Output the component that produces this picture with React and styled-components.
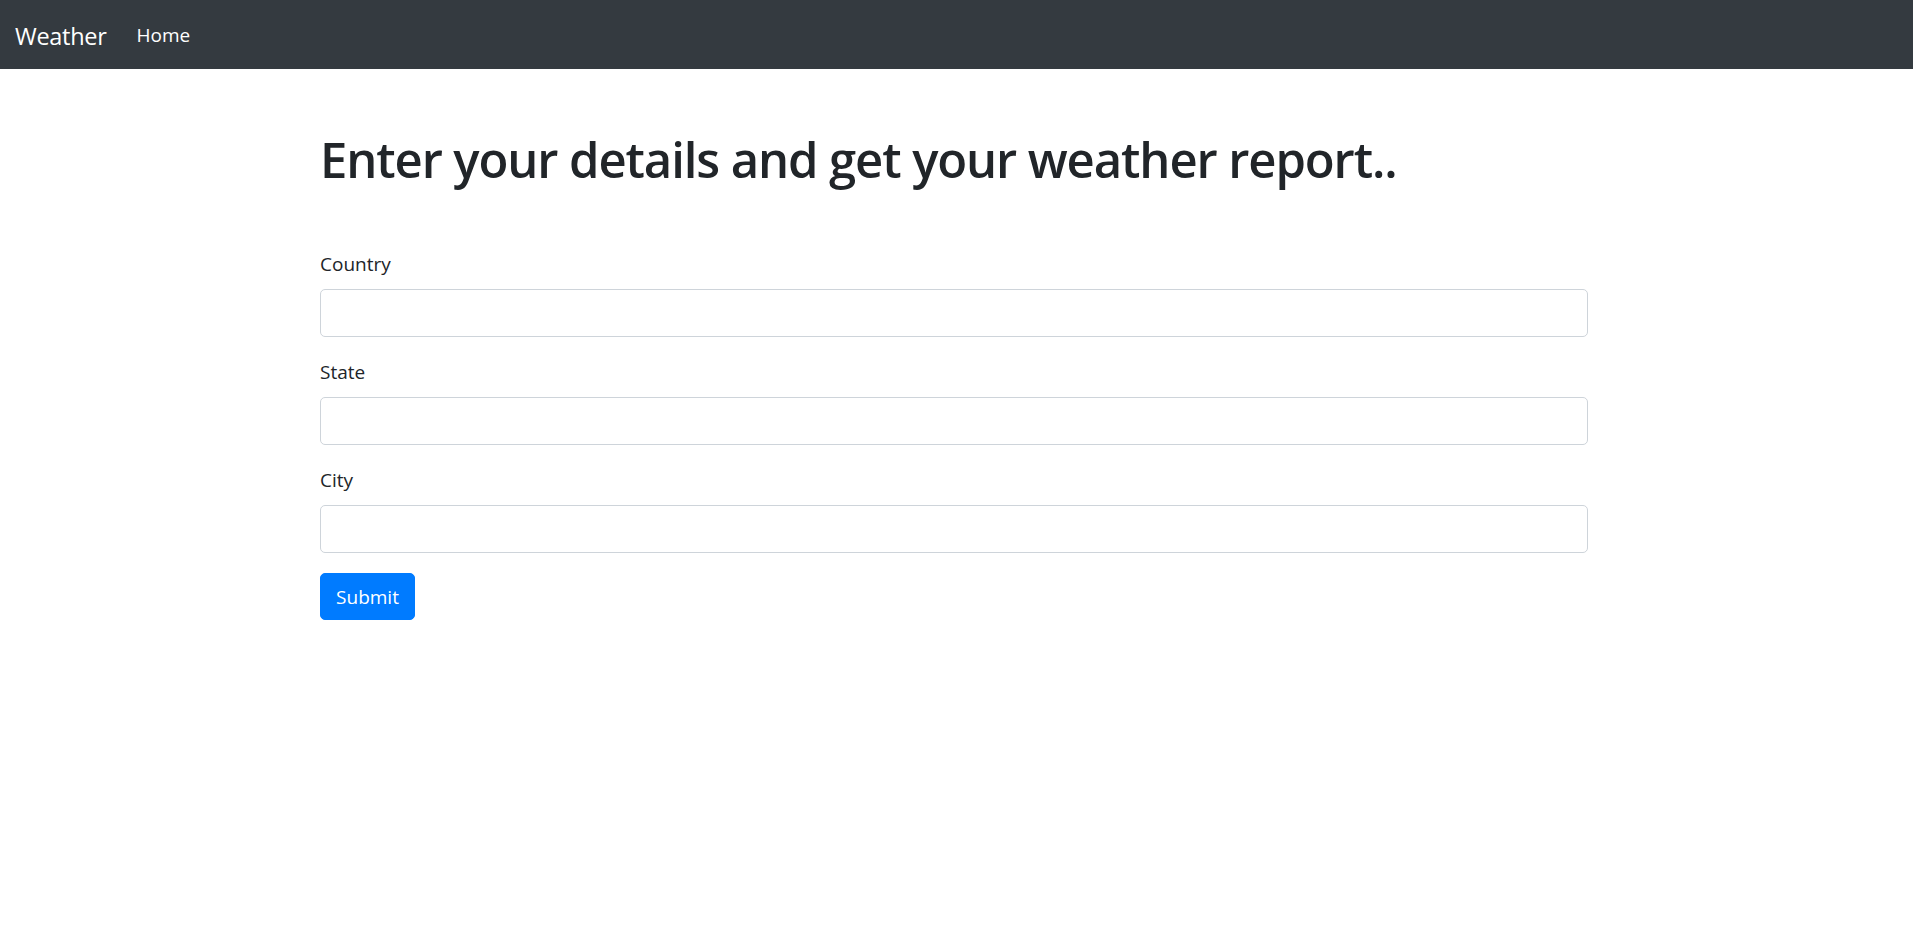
import styled, { createGlobalStyle } from 'styled-components';

const GlobalStyle = createGlobalStyle`
  body {
    margin: 0;
    background: #fff;
    font-family: "Segoe UI", "Open Sans", "Noto Sans", sans-serif;
    color: #212529;
  }
`;

const Navbar = styled.nav`
  display: flex;
  align-items: center;
  height: 69px;
  padding: 0 15px;
  background-color: #343a40;
  box-sizing: border-box;
`;

const Brand = styled.a`
  font-size: 23.5px;
  color: #fff;
  margin-right: 30px;
  margin-top: 2px;
  letter-spacing: -0.3px;
  text-decoration: none;
`;

const NavLink = styled.a`
  font-size: 19px;
  color: #fff;
  text-decoration: none;
`;

const Main = styled.main`
  padding: 60px 325px 0 320px;
`;

const Heading = styled.h1`
  margin: 0 0 60px;
  font-size: 49px;
  font-weight: 600;
  line-height: 60px;
  letter-spacing: -1.1px;
`;

const Field = styled.div`
  display: flex;
  flex-direction: column;
  gap: 10px;
  margin-bottom: 20px;
`;

const Label = styled.label`
  font-size: 19px;
  line-height: 30px;
`;

const Input = styled.input`
  height: 48px;
  box-sizing: border-box;
  border: 1px solid #ced4da;
  border-radius: 5px;
  padding: 7px 15px;
  font-size: 20px;
  font-family: inherit;
  outline: none;
`;

const Button = styled.button`
  width: 95px;
  height: 47px;
  background-color: #007bff;
  border: 1px solid #007bff;
  border-radius: 5px;
  color: #fff;
  font-size: 19px;
  font-family: inherit;
  cursor: pointer;
`;

const fields = ['Country', 'State', 'City'];

function App() {
  return (
    <>
      <GlobalStyle />
      <Navbar>
        <Brand href="#">Weather</Brand>
        <NavLink href="#">Home</NavLink>
      </Navbar>
      <Main>
        <Heading>Enter your details and get your weather report..</Heading>
        <form onSubmit={(e) => e.preventDefault()}>
          {fields.map((name) => (
            <Field key={name}>
              <Label>{name}</Label>
              <Input type="text" />
            </Field>
          ))}
          <Button type="submit">Submit</Button>
        </form>
      </Main>
    </>
  );
}

export default App;
